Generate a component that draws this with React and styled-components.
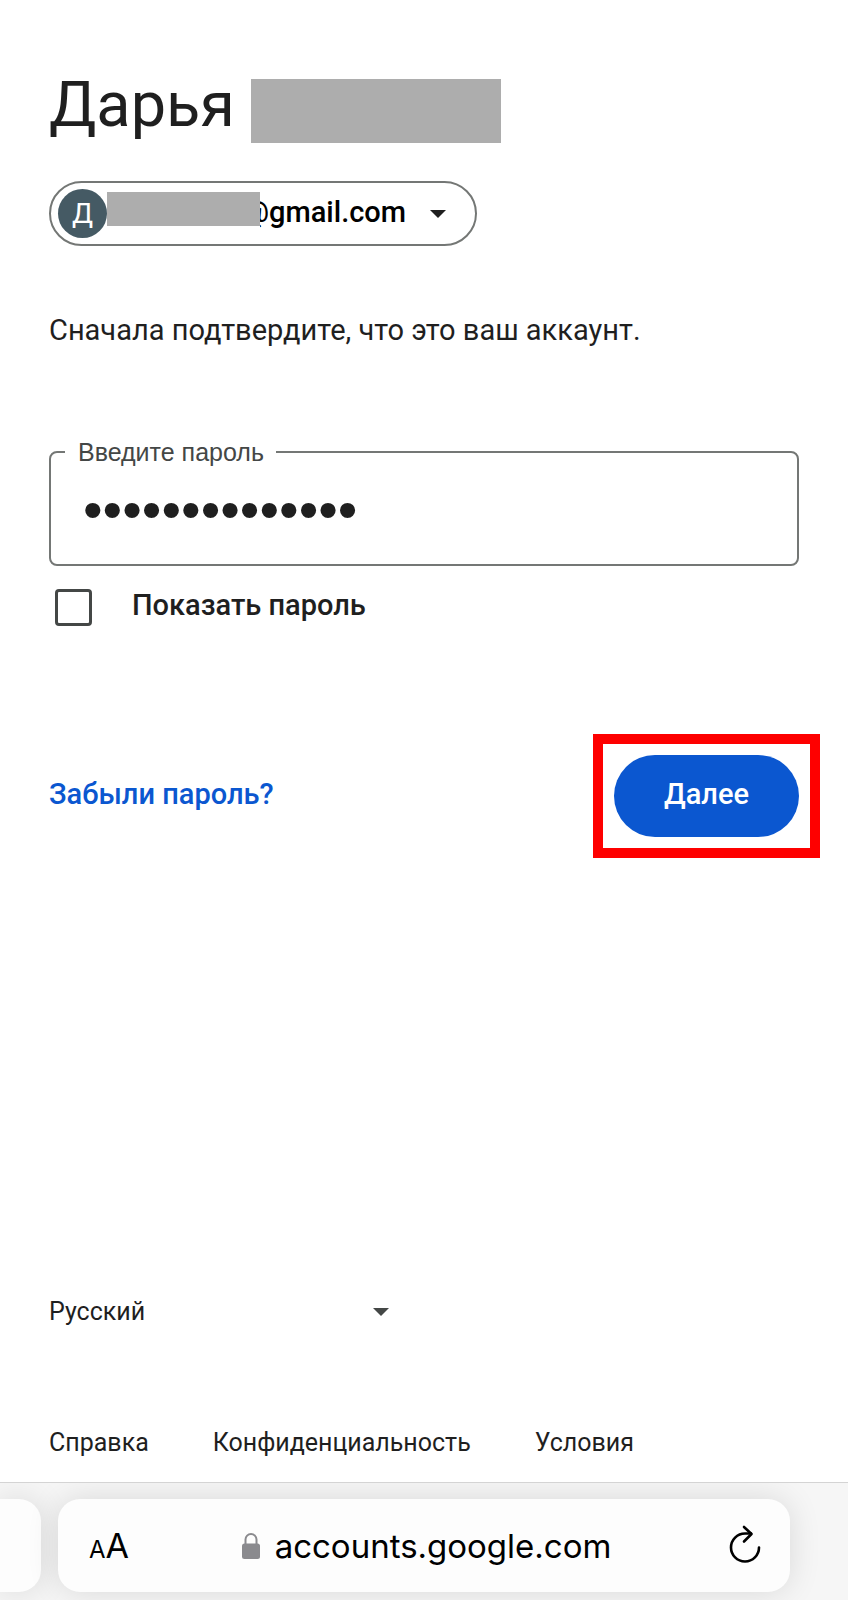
import React, { useState } from 'react'
import styled, { createGlobalStyle } from 'styled-components'

const App = () => {

  const [password, setPassword] = useState('qwertyuiopasdf')
  const [visible, setVisible] = useState(false)
  const [lang, setLang] = useState('ru')

  const handleSubmit = (e) => {
    e.preventDefault()
  }

  return (
    <Page>
      <GlobalStyle />
      <Main>
        <Title>
          Дарья
          <NameMask />
        </Title>

        <AccountChip type='button'>
          <Avatar>Д</Avatar>
          <EmailMask />
          <Email>@gmail.com</Email>
          <Caret />
        </AccountChip>

        <Hint>Сначала подтвердите, что это ваш аккаунт.</Hint>

        <form onSubmit={handleSubmit}>
          <Field>
            <Legend>
              <label htmlFor='password'>Введите пароль</label>
            </Legend>
            <PasswordInput
              id='password'
              type={visible ? 'text' : 'password'}
              $visible={visible}
              value={password}
              onChange={(e) => setPassword(e.target.value)}
            />
          </Field>

          <ShowRow>
            <Checkbox
              type='checkbox'
              checked={visible}
              onChange={(e) => setVisible(e.target.checked)}
            />
            <span>Показать пароль</span>
          </ShowRow>

          <Actions>
            <ForgotLink href='#forgot'>Забыли пароль?</ForgotLink>
            <Highlight>
              <NextButton type='submit'>Далее</NextButton>
            </Highlight>
          </Actions>
        </form>
      </Main>

      <Footer>
        <LangBox>
          <LangSelect
            aria-label='Язык'
            value={lang}
            onChange={(e) => setLang(e.target.value)}
          >
            <option value='ru'>Русский</option>
          </LangSelect>
          <Caret $muted />
        </LangBox>
        <FooterLinks>
          <a href='#help'>Справка</a>
          <a href='#privacy'>Конфиденциальность</a>
          <a href='#terms'>Условия</a>
        </FooterLinks>
      </Footer>

      <BrowserBar>
        <PrevTab />
        <AddressBar>
          <TextSize type='button'>
            <small>A</small>A
          </TextSize>
          <Address>
            <LockIcon />
            accounts.google.com
          </Address>
          <ReloadButton type='button' aria-label='Обновить'>
            <ReloadIcon />
          </ReloadButton>
        </AddressBar>
      </BrowserBar>
    </Page>
  )
}

const Caret = ({ $muted }) => (
  <CaretSvg $muted={$muted} width='16' height='8' viewBox='0 0 16 8'>
    <path d='M0 0h16l-8 8z' />
  </CaretSvg>
)

const LockIcon = () => (
  <svg width='20' height='28' viewBox='0 0 20 28'>
    <path d='M4.500 13V7.500a5.500 5.500 0 0 1 11 0V13' fill='none' stroke='#8a8a8e' strokeWidth='2' />
    <rect x='1' y='11.500' width='18' height='15.500' rx='2.500' fill='#8a8a8e' />
  </svg>
)

const ReloadIcon = () => (
  <svg width='32' height='38' viewBox='0 0 32 38' fill='none' stroke='#000' strokeWidth='2.600' strokeLinecap='round' strokeLinejoin='round'>
    <path d='M30 22.500A14 14 0 1 1 16 8.500h6' />
    <path d='M15 2l7.500 7-7.500 7.500' />
  </svg>
)

const GlobalStyle = createGlobalStyle`
  * {
    box-sizing: border-box;
  }

  body {
    margin: 0;
    background: #fff;
    color: #1f1f1f;
    font-family: Roboto, "Liberation Sans", sans-serif;
  }
`

const Page = styled.div`
  display: flex;
  flex-direction: column;
  min-height: 100vh;
`

const Main = styled.main`
  flex: 1;
  padding: 72px 49px 0;
`

const Title = styled.h1`
  display: flex;
  align-items: flex-start;
  gap: 16px;
  margin: 0 0 38px;
  font-size: 63px;
  font-weight: 400;
  line-height: 66px;
`

const NameMask = styled.span`
  width: 250px;
  height: 64px;
  margin-top: 7px;
  background: #adadad;
`

const AccountChip = styled.button`
  display: flex;
  align-items: center;
  height: 65px;
  padding: 0 29px 0 7px;
  border: 2px solid #747775;
  border-radius: 33px;
  background: #fff;
  color: #000;
  font-family: inherit;
  font-size: 29px;
  font-weight: 500;
  line-height: 32px;
  cursor: pointer;
`

const Avatar = styled.span`
  display: flex;
  align-items: center;
  justify-content: center;
  width: 49px;
  height: 49px;
  border-radius: 50%;
  background: #455a64;
  color: #fff;
  font-size: 28px;
  font-weight: 400;
`

const EmailMask = styled.span`
  align-self: flex-start;
  z-index: 1;
  width: 153px;
  height: 34px;
  margin: 9px -17px 0 0;
  background: #adadad;
`

const Email = styled.span`
  padding-bottom: 4px;
  clip-path: inset(0 0 0 17px);
`

const CaretSvg = styled.svg`
  margin-left: 24px;
  fill: ${ props => props.$muted ? '#444746' : '#1f1f1f' };
  pointer-events: none;
`

const Hint = styled.p`
  margin: 67px 0 0;
  color: #1f1f1f;
  font-size: 29px;
  line-height: 34px;
`

const Field = styled.fieldset`
  display: flex;
  align-items: center;
  height: 128px;
  margin: 91px 0 0;
  padding: 0 32px 12px;
  border: 2px solid #747775;
  border-radius: 8px;
`

const Legend = styled.legend`
  margin-left: -18px;
  padding: 0 12px 0 13px;
  color: #444746;
  font-family: "Liberation Sans", sans-serif;
  font-size: 25px;
  line-height: 28px;
`

const PasswordInput = styled.input`
  width: 100%;
  height: 64px;
  padding: 0;
  border: 0;
  outline: 0;
  background: transparent;
  color: #1f1f1f;
  font-family: "Liberation Sans", sans-serif;
  font-size: ${ props => props.$visible ? '29px' : '56px' };
`

const ShowRow = styled.label`
  display: flex;
  align-items: center;
  gap: 40px;
  margin: 22px 0 0 6px;
  color: #1f1f1f;
  font-size: 29px;
  font-weight: 500;
  line-height: 34px;

  span {
    padding-bottom: 4px;
  }
`

const Checkbox = styled.input`
  appearance: none;
  width: 37px;
  height: 37px;
  margin: 0;
  border: 3px solid #444746;
  border-radius: 4px;

  &:checked {
    background: #0b57d0;
    border-color: #0b57d0;
  }
`

const Actions = styled.div`
  display: flex;
  align-items: center;
  justify-content: space-between;
  margin-top: 129px;
`

const ForgotLink = styled.a`
  padding-bottom: 4px;
  color: #0b57d0;
  font-size: 29px;
  font-weight: 500;
  line-height: 34px;
  text-decoration: none;
`

const Highlight = styled.div`
  outline: 10px solid #fe0000;
  outline-offset: 11px;
`

const NextButton = styled.button`
  display: block;
  height: 82px;
  padding: 0 50px 4px;
  border: 0;
  border-radius: 41px;
  background: #0b57d0;
  color: #fff;
  font-family: inherit;
  font-size: 29px;
  font-weight: 500;
  cursor: pointer;
`

const Footer = styled.footer`
  padding: 0 49px 23px;
  font-size: 25px;
  line-height: 32px;
`

const LangBox = styled.div`
  display: flex;
  align-items: center;
  width: 340px;
`

const LangSelect = styled.select`
  appearance: none;
  flex: 1;
  height: 48px;
  margin-right: -40px;
  padding: 0;
  border: 0;
  background: transparent;
  color: #1f1f1f;
  font: inherit;
`

const FooterLinks = styled.nav`
  display: flex;
  gap: 64px;
  margin-top: 91px;

  a {
    color: #1f1f1f;
    text-decoration: none;
  }
`

const BrowserBar = styled.div`
  display: flex;
  gap: 17px;
  padding: 16px 58px 8px 0;
  overflow: hidden;
  border-top: 1px solid #d4d4d4;
  background: #f6f6f6;
`

const PrevTab = styled.div`
  width: 41px;
  border-radius: 0 22px 22px 0;
  background: #fdfdfd;
  box-shadow: 0 0 32px rgba(0,0,0,.12);
`

const AddressBar = styled.div`
  display: flex;
  flex: 1;
  align-items: center;
  justify-content: space-between;
  height: 93px;
  padding: 0 29px 0 31px;
  border-radius: 22px;
  background: #fdfdfd;
  box-shadow: 0 0 32px rgba(0,0,0,.12);
  font-family: Inter, "Liberation Sans", sans-serif;
`

const TextSize = styled.button`
  padding: 4px 0 0;
  border: 0;
  background: none;
  color: #000;
  font-family: inherit;
  font-size: 34px;
  line-height: 40px;

  small {
    font-size: 24px;
  }
`

const Address = styled.div`
  display: flex;
  align-items: center;
  gap: 14px;
  margin-right: 6px;
  color: #000;
  font-size: 33px;
  line-height: 40px;
`

const ReloadButton = styled.button`
  display: flex;
  padding: 0 0 4px;
  border: 0;
  background: none;
`

export default App
